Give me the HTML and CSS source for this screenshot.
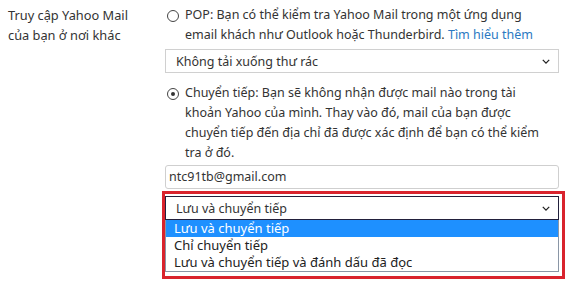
FILE: index.html
```html
<!DOCTYPE html>
<html lang="vi">
<head>
  <meta charset="UTF-8">
  <title>Truy cập Yahoo Mail</title>
  <link rel="stylesheet" href="styles.css">
</head>
<body>

  <div class="setting">
    <div class="label">Truy cập Yahoo Mail của bạn ở nơi khác</div>

    <div class="options">
      <div class="radio-row">
        <span class="radio"></span>
        <p>POP: Bạn có thể kiểm tra Yahoo Mail trong một ứng dụng<br>email khách như Outlook hoặc Thunderbird. <a href="#">Tìm hiểu thêm</a></p>
      </div>

      <div class="select">
        <span>Không tải xuống thư rác</span>
        <svg class="chevron" viewBox="0 0 10 6"><path d="M1 1l4 4 4-4" /></svg>
      </div>

      <div class="radio-row">
        <span class="radio checked"></span>
        <p>Chuyển tiếp: Bạn sẽ không nhận được mail nào trong tài<br>khoản Yahoo của mình. Thay vào đó, mail của bạn được<br>chuyển tiếp đến địa chỉ đã được xác định để bạn có thể kiểm<br>tra ở đó.</p>
      </div>

      <div class="input">ntc91tb@gmail.com</div>

      <div class="highlight">
        <div class="select open">
          <span>Lưu và chuyển tiếp</span>
          <svg class="chevron" viewBox="0 0 10 6"><path d="M1 1l4 4 4-4" /></svg>
        </div>
        <ul class="list">
          <li class="active">Lưu và chuyển tiếp</li>
          <li>Chỉ chuyển tiếp</li>
          <li>Lưu và chuyển tiếp và đánh dấu đã đọc</li>
        </ul>
      </div>
    </div>
  </div>

</body>
</html>
```

FILE: styles.css
```css
body {
  margin: 0;
  padding: 5px 8px 0 8px;
  font-family: 'Noto Sans', 'Open Sans', sans-serif;
  font-size: 12.5px;
  color: #333;
  background: #fff;
}

.setting {
  display: grid;
  grid-template-columns: 157px 394px;
}

.label {
  line-height: 20px;
  width: 125px;
  font-size: 12.8px;
}

.radio-row {
  display: flex;
  align-items: flex-start;
  gap: 6px;
  padding-left: 2px;
}

.radio-row p {
  margin: 0;
  line-height: 20px;
  white-space: nowrap;
}

.radio {
  flex: none;
  width: 10px;
  height: 10px;
  margin-top: 5px;
  border: 1px solid #444;
  border-radius: 50%;
  position: relative;
}

.radio.checked::after {
  content: '';
  position: absolute;
  left: 3px;
  top: 3px;
  width: 4px;
  height: 4px;
  border-radius: 50%;
  background: #333;
}

a {
  color: #2b79c2;
  text-decoration: none;
}

.select {
  display: flex;
  align-items: center;
  justify-content: space-between;
  height: 22px;
  padding: 0 8px 0 10px;
  border: 1px solid #d0d0d0;
  margin: 4px 0 10px 0;
}

.chevron {
  width: 8px;
  height: 5px;
  fill: none;
  stroke: #222;
  stroke-width: 1.6;
}

.input {
  height: 22px;
  line-height: 22px;
  padding: 0 3px;
  border: 1px solid #cfcfcf;
  border-radius: 3px;
  margin-top: 2px;
}

.highlight {
  margin: 2px -6px 0 -3px;
  padding: 2px 3px 4px 0;
  border: 3px solid #d9232d;
}

.select.open {
  margin: 0;
  border-color: #22203c;
}

.list {
  list-style: none;
  margin: 0;
  padding: 0;
  border: 1px solid #8a96a6;
  border-top: none;
  font-size: 13px;
}

.list li {
  height: 17px;
  line-height: 17px;
  padding-left: 8px;
  color: #222;
}

.list li.active {
  background: #1e90ff;
  color: #fff;
}
```
